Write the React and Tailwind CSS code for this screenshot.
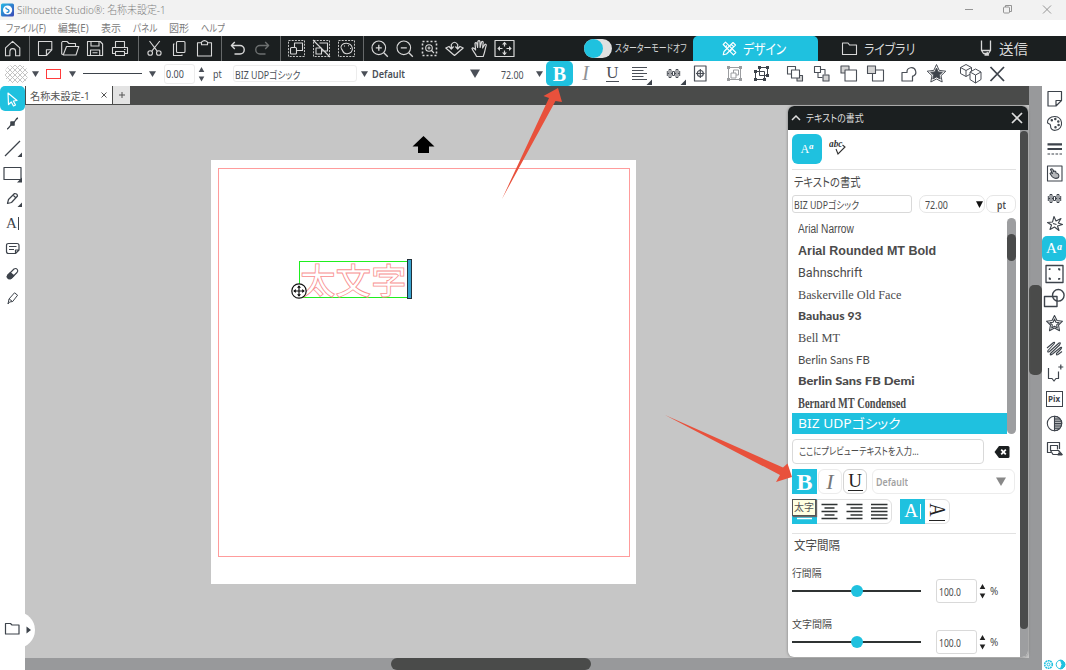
import { useLayoutEffect, useRef, useState } from 'react'
import clsx from 'clsx'

const JP = "font-['Noto_Sans','Noto_Sans_CJK_JP',sans-serif] [font-feature-settings:'palt']"
const SERIF = "font-['Liberation_Serif',serif]"

// Text squeezed or stretched to a fixed width
function Fit({ w, className, children }) {
  const ref = useRef(null)
  const [scale, setScale] = useState(1)

  useLayoutEffect(() => {
    setScale(w / ref.current.offsetWidth)
  }, [w])

  return (
    <span className={clsx('block shrink-0 whitespace-nowrap', className)} style={{ width: w }}>
      <span ref={ref} className="inline-block origin-left" style={{ transform: `scaleX(${scale})` }}>
        {children}
      </span>
    </span>
  )
}

function Ico({ className, sw = 1.1, children }) {
  return (
    <svg
      viewBox="0 0 25 25"
      className={clsx('block h-[25px] w-[25px] shrink-0', className)}
      fill="none"
      stroke="currentColor"
      strokeWidth={sw}
      strokeLinejoin="round"
    >
      {children}
    </svg>
  )
}

function Down({ className }) {
  return (
    <svg viewBox="0 0 10 10" preserveAspectRatio="none" className={clsx('block shrink-0', className)}>
      <path d="M0 0.5H10L5 10Z" fill="currentColor" />
    </svg>
  )
}

function Spinner({ className }) {
  return (
    <svg viewBox="0 0 7 16" className={clsx('block h-4 w-[7px] shrink-0', className)} fill="currentColor">
      <path d="M3.5 1L6.3 6H0.7Z M3.5 15.5L6.3 10.5H0.7Z" />
    </svg>
  )
}

function Sep({ className }) {
  return <div className={clsx('h-[25px] w-px shrink-0 bg-[#66696a]', className)} />
}

const corner = <path d="M25 18.5V24H19.5Z" fill="#3d434b" stroke="none" />

function TitleBar() {
  return (
    <div className="flex h-5 items-center bg-[#f2f2f2] text-[#808080]">
      <svg viewBox="0 0 14 14" className="ml-px h-[14px] w-[14px]">
        <defs>
          <linearGradient id="logo" x1="0" y1="0" x2="1" y2="1">
            <stop offset="0" stopColor="#25b9e6" />
            <stop offset="1" stopColor="#3a45b5" />
          </linearGradient>
        </defs>
        <rect x="0" y="0.5" width="13" height="13" rx="1.5" fill="url(#logo)" />
        <circle cx="6.6" cy="7" r="4.6" fill="#fff" />
        <path d="M4.8 4.4C4.8 7 8 5.8 8 7.8C8 9.4 6.4 9.6 5.6 9.2" fill="none" stroke="#2b8fd6" strokeWidth="1.4" />
      </svg>
      <Fit w={149} className={clsx(JP, 'ml-[2px] text-[11px] font-light leading-5')}>Silhouette Studio®: 名称未設定-1</Fit>
      <svg viewBox="0 0 90 20" className="ml-auto mr-[12px] h-5 w-[90px]" fill="none" stroke="#8a8a8a" strokeWidth="0.9">
        <path d="M1 9.5H9 M79 5.5L87 13.5M87 5.5L79 13.5" />
        <rect x="39.5" y="7" width="6" height="6" rx="1" />
        <path d="M41.5 7V5.5H47.5V11.5H45.5" />
      </svg>
    </div>
  )
}

function MenuBar() {
  return (
    <div className={clsx(JP, 'flex h-4 bg-white pl-[6px] text-[10px] leading-4 text-[#7a7a7a]')}>
      <Fit w={40}>ファイル(F)</Fit>
      <Fit w={31} className="ml-3">編集(E)</Fit>
      <Fit w={20} className="ml-3">表示</Fit>
      <Fit w={24} className="ml-3">パネル</Fit>
      <Fit w={20} className="ml-3">図形</Fit>
      <Fit w={24} className="ml-3">ヘルプ</Fit>
    </div>
  )
}

const dashedBox = <rect x="4.5" y="4.5" width="16" height="16" strokeDasharray="2 1.2" strokeWidth="0.9" />

function MainBar() {
  return (
    <div className="flex h-[25px] items-center bg-[#1b1f20] text-[#d8d8d8]">
      <Ico><path d="M5.5 11.8L12.6 5.3L19.8 11.8V19.8H15.6V15.5A2.8 2.8 0 0 0 9.9 15.5V19.8H5.5Z" /></Ico>
      <Sep className="ml-1" />
      <Ico className="ml-[3px]"><path d="M5.5 5.5H18.8V13.8L13.4 19.5H5.5Z M18.8 13.8H13.4V19.5" /></Ico>
      <Ico><path d="M6 19L3.7 18V6.5L4.5 5.5H9L11 7.5H17.5V10.5 M5.2 19L8.5 10.5H20.8L18 19Z" /></Ico>
      <Ico><path d="M4.5 5.5H17.2L19.6 8V19.5H4.5Z M8 5.5V10H16V5.5 M7.5 19.5V14H16.7V19.5 M9.5 16.7H14.5" /></Ico>
      <Ico><path d="M7.5 11.5V5.5H16.5V11.5 M7 17.5H4.5V11.5H19.5V17.5H17 M7.5 15.5H16.5V19.5H7.5Z M16 13.5h1.5" /></Ico>
      <Sep className="ml-[5px]" />
      <Ico className="ml-[3px]">
        <path d="M7.5 5L15.2 15.2M17.8 5L9.8 15.2" />
        <circle cx="8.2" cy="17" r="2.3" />
        <circle cx="16.8" cy="17" r="2.3" />
      </Ico>
      <Ico>
        <rect x="9.5" y="5.5" width="8.5" height="11" rx="1" />
        <path d="M7.5 8H6.5V19.5H15V18.5" />
      </Ico>
      <Ico>
        <path d="M9.5 6.8H5.5V20H19.5V6.8H15.5" />
        <path d="M9.5 8.7V6.2Q12.5 3 15.5 6.2V8.7Z" />
      </Ico>
      <Sep className="ml-[4px]" />
      <Ico className="ml-[3px]" sw={1.4}><path d="M9.8 6L6.4 9.5L9.8 13 M6.6 9.5H15A3.8 3.8 0 0 1 15 18H9.5" /></Ico>
      <Ico className="text-[#6d7070]" sw={1.4}><path d="M15.2 6L18.6 9.5L15.2 13 M18.4 9.5H10A3.8 3.8 0 0 0 10 18H15.5" /></Ico>
      <Sep className="ml-[5px]" />
      <Ico className="ml-[3px]">
        {dashedBox}
        <rect x="10.5" y="7" width="8" height="7.5" />
        <rect x="6.5" y="11.5" width="6" height="6.5" rx="1" fill="#1b1f20" />
      </Ico>
      <Ico>
        {dashedBox}
        <path d="M10.5 7H18.5V15H12.5 M7 12H12.5V18H7Z M4 4L21 21" />
      </Ico>
      <Ico>
        {dashedBox}
        <path d="M12.5 7.3C8 7 5.8 11 7.5 13C9 14 8.5 17.5 12.5 17.7C16.5 18 19 15 18.3 12C17.8 9.5 15.5 7.5 12.5 7.3Z" fill="#1b1f20" />
        <path d="M10 10h1M14 9.7h1M16 12.5h1" />
      </Ico>
      <Sep className="ml-1" />
      <Ico className="ml-[3px]">
        <circle cx="11.8" cy="11.8" r="6.8" />
        <path d="M16.8 16.8L20.8 20.8 M8.8 11.8H14.8M11.8 8.8V14.8" strokeWidth="1.3" />
      </Ico>
      <Ico>
        <circle cx="11.8" cy="11.8" r="6.8" />
        <path d="M16.8 16.8L20.8 20.8 M8.8 11.8H14.8" strokeWidth="1.3" />
      </Ico>
      <Ico>
        <rect x="5.5" y="5.5" width="14" height="14" strokeDasharray="2 2" strokeWidth="1.6" />
        <circle cx="12" cy="12" r="3.3" />
        <path d="M14.5 14.5L17 17M12 10.5V13.5M10.5 12H13.5" />
      </Ico>
      <Ico sw={1.2}>
        <path d="M7.5 10.3L3.8 12L12.5 19.5L21.2 12L17.5 10.3 M9.3 12.5V8.5Q12.5 4 15.7 8.5V12.5 M7 10.5L9.3 13L11.6 10.5 M13.4 10.5L15.7 13L18 10.5" />
      </Ico>
      <Ico sw={1.2}>
        <path d="M9.5 20.5C9 18 6 15.5 5 12.5C5.5 11.5 7.2 12 8.6 14L8 7.5C8.5 6 9.7 6.5 9.9 7.5L10.6 11.5L10.9 5.5C11.3 4.3 12.6 4.3 12.9 5.5L13.1 11.5L14.5 6C15.2 5 16.3 5.5 16.2 6.5L15.6 12L17.8 8.5C18.7 7.8 19.5 8.5 19.2 9.5C18.3 12 18 16 16.2 20.5Z" />
      </Ico>
      <Ico sw={1.2}>
        <rect x="3" y="4.5" width="19" height="16" />
        <path d="M12.5 6.5V10.5M12.5 14.5V18.5M6 12.5H10.5M14.5 12.5H19" />
        <path d="M12.5 5.8L15 8.5H10Z M12.5 19.2L15 16.5H10Z M5.3 12.5L8 10V15Z M19.7 12.5L17 10V15Z" fill="currentColor" stroke="none" />
      </Ico>

      <div className="ml-[67px] flex h-[19px] w-[28px] rounded-full bg-[#e0e0e0]">
        <div className="h-[19px] w-[19px] rounded-full bg-[#1fc1df]" />
      </div>
      <Fit w={72} className={clsx(JP, 'ml-[3px] text-[10.5px] leading-[25px]')}>スターターモードオフ</Fit>

      <div className="ml-[6px] flex h-[25px] w-[125px] items-center rounded-t-[5px] bg-[#1fc1df] text-white">
        <Ico className="ml-6">
          <path d="M8.5 6.2L6.2 8.5L16.5 18.8L18.8 16.5Z M8 11.3L10 9.5M12.5 15.7L14.5 14" />
          <path d="M16 6.5L18.5 9L9.5 18L6.2 18.8L7 15.5Z M14.2 8.3L16.8 10.8" />
        </Ico>
        <Fit w={43} className={clsx(JP, 'ml-px text-[14px] leading-[25px]')}>デザイン</Fit>
      </div>
      <Ico className="ml-[19px]"><path d="M5.5 7H11L12.5 9H19.5V18.5H5.5Z" /></Ico>
      <Fit w={51} className={clsx(JP, 'ml-[2px] text-[14px] leading-[25px]')}>ライブラリ</Fit>
      <Ico className="ml-[58px]" sw={1.3}>
        <path d="M8.5 4.5V14.5H17.5V4.5 M8.5 14.5L10.5 17.5H15.5L17.5 14.5 M11.5 19H15.5L14 16" />
      </Ico>
      <Fit w={29} className={clsx(JP, 'ml-px text-[14px] leading-[25px]')}>送信</Fit>
    </div>
  )
}

function AlignIcon({ x = [5, 20, 5, 16.5], className }) {
  return (
    <Ico className={className} sw={1.5}>
      <path
        d={[5.5, 9, 12.5, 16, 19.5].map((y, i) => `M${i % 2 ? x[2] : x[0]} ${y}H${i % 2 ? x[3] : x[1]}`).join('')}
        strokeLinejoin="miter"
      />
    </Ico>
  )
}

function SpaceIcon({ children }) {
  return (
    <Ico sw={1}>
      <path d="M6.5 12.5H8M10 12.5H11.5M13.5 12.5H15M17 12.5H18.5M6.3 10V15M18.7 10V15" />
      <rect x="8" y="8.5" width="2" height="8" />
      <rect x="11.5" y="10.5" width="2" height="4" />
      <rect x="15" y="8.5" width="2" height="8" />
      {children}
    </Ico>
  )
}

function GroupIcon({ solid }) {
  return (
    <Ico className={solid ? 'text-[#3d434b]' : 'text-[#9b9da0]'} sw={1}>
      {solid ? (
        <>
          <rect x="6.5" y="10.5" width="9" height="8" />
          <rect x="10.5" y="6.5" width="8" height="8" />
          <path d="M5 9h3v3H5zM14 17h3v3h-3zM5 17h3v3H5zM9 5h3v3H9zM17 5h3v3h-3zM17 13h3v3h-3z" fill="currentColor" stroke="none" />
        </>
      ) : (
        <>
          <rect x="6.5" y="6.5" width="12" height="12" />
          <path d="M9 12H14V17H9ZM11.5 12V9H16.5V14H14" />
          <path d="M5 5h3v3H5zM17 5h3v3h-3zM5 17h3v3H5zM17 17h3v3h-3z" fill="currentColor" stroke="none" />
        </>
      )}
    </Ico>
  )
}

function OptionsBar() {
  return (
    <div className="flex h-[25px] items-center bg-white pl-[5px] text-[#4a4f57]">
      <svg viewBox="0 0 23 18" className="h-[18px] w-[23px]">
        <defs>
          <pattern id="mesh" width="5" height="5" patternUnits="userSpaceOnUse">
            <path d="M0 0L5 5M5 0L0 5" stroke="#bdbdbd" strokeWidth="0.9" />
          </pattern>
        </defs>
        <rect width="23" height="18" rx="8" fill="url(#mesh)" />
      </svg>
      <Down className="ml-1 h-[6px] w-[7px]" />
      <div className="ml-[7px] h-[10px] w-[15px] border border-[#ff3b3b]" />
      <Down className="ml-[8px] h-[6px] w-[7px]" />
      <div className="ml-[7px] h-[1.5px] w-[59px] bg-[#3d434b]" />
      <Down className="ml-[7px] h-[6px] w-[7px]" />
      <div className={clsx(JP, 'ml-2 flex h-5 w-[31px] items-center rounded-[3px] border border-[#ececec] pl-px pt-[2px] text-[10px]')}>
        <Fit w={18}>0.00</Fit>
      </div>
      <Spinner className="ml-[3px]" />
      <Fit w={9} className={clsx(JP, 'ml-2 pt-px text-[10px]')}>pt</Fit>
      <div className={clsx(JP, 'ml-[11px] flex h-[17px] w-[124px] items-center rounded-[3px] border border-[#ececec] pl-px pt-[3px] text-[10px]')}>
        <Fit w={65}>BIZ UDPゴシック</Fit>
      </div>
      <Down className="ml-1 h-[6px] w-[7px]" />
      <Fit w={33} className={clsx(JP, 'ml-1 pt-px text-[10px] font-semibold')}>Default</Fit>
      <Down className="ml-[65px] h-[9px] w-[10px]" />
      <Fit w={23} className={clsx(JP, 'ml-[21px] pt-[3px] text-[10px]')}>72.00</Fit>
      <Down className="ml-[12px] h-[6px] w-[7px]" />
      <div className={clsx(SERIF, 'ml-[3px] flex h-[25px] w-[27px] items-center justify-center rounded-[5px] bg-[#1fc1df] text-[20px] font-bold text-white')}>B</div>
      <div className={clsx(SERIF, 'w-[25px] text-center text-[20px] italic leading-[25px] text-[#8f9296]')}>I</div>
      <div className={clsx(SERIF, 'ml-[2px] flex w-[25px] justify-center text-[17px] leading-[16px]')}>
        <span className="w-[13px] border-b border-[#4a4f57] text-center">U</span>
      </div>
      <div className="ml-[2px] flex">
        <Ico sw={1.2}>
          <path d="M5 6.5H20M5 9.5H16.5M5 12.5H20M5 15.5H16.5M5 18.5H20" />
          {corner}
        </Ico>
      </div>
      <div className="ml-[9px]"><SpaceIcon>{corner}</SpaceIcon></div>
      <Ico className="ml-[2px]" sw={1.2}>
        <rect x="6.5" y="5" width="11.5" height="15" />
        <circle cx="12.3" cy="12.5" r="3" />
        <path d="M12.3 8V17M8 12.5H16.6" />
      </Ico>
      <div className="ml-[9px] flex gap-[2px]">
        <GroupIcon />
        <GroupIcon solid />
      </div>
      <div className="ml-2 flex gap-[2px]">
        <Ico>
          <rect x="5.5" y="5.5" width="8" height="7.5" />
          <rect x="15" y="14.5" width="5.5" height="5.5" fill="#d4d4d4" />
          <rect x="9.5" y="9" width="8" height="8" fill="#fff" />
        </Ico>
        <Ico>
          <rect x="5.5" y="5.5" width="6" height="6" />
          <path d="M12 8.5H16V13.5M9 12V16.5H13.5" />
          <rect x="14" y="14" width="6" height="6" fill="#d4d4d4" />
        </Ico>
        <Ico>
          <rect x="5" y="5" width="8" height="7" fill="#d4d4d4" />
          <rect x="9" y="9" width="11.5" height="11" fill="#fff" />
        </Ico>
        <Ico>
          <rect x="9.5" y="9" width="11" height="11" />
          <rect x="4.5" y="5" width="8" height="7.5" fill="#d4d4d4" />
        </Ico>
      </div>
      <Ico className="ml-2" sw={1.2}>
        <path d="M6 11.5H11A4.4 4.4 0 1 1 17 15.2H16.5V20H6Z" />
      </Ico>
      <Ico className="ml-[3px]" sw={1}>
        <path d="M12.5 3.5L15.2 9.4L21.8 10.2L17 14.7L18.2 21L12.5 18L6.8 21L8 14.7L3.2 10.2L9.8 9.4Z" />
        <path d="M12.5 7L14.2 10.9L18.4 11.3L15.3 14.1L16.2 18L12.5 16L8.8 18L9.7 14.1L6.6 11.3L10.8 10.9Z" fill="#3d434b" />
      </Ico>
      <Ico className="ml-[9px]" sw={1}>
        <path d="M2.5 6.5L8 3.5L13.5 6.5V12.5L8 15.5L2.5 12.5Z M2.5 6.5L8 9.5L13.5 6.5M8 9.5V15.5" />
        <path d="M12 11L17.5 8L23 11V18.5L17.5 22L12 18.5Z" fill="#fff" />
        <path d="M12 11L17.5 14L23 11M17.5 14V22" />
      </Ico>
      <Ico className="ml-[2px] text-[#3d434b]" sw={1.8}><path d="M5.5 6L19 20M19 6L5.5 20" /></Ico>
    </div>
  )
}

function LeftRail() {
  return (
    <div className="flex w-[25px] shrink-0 flex-col bg-white text-[#3d434b]">
      <div className="rounded-[5px] bg-[#1fc1df] text-white">
        <Ico sw={1.2}><path d="M8 7L17 14.5L13.3 15L15.5 19L13.5 20L11.3 16L8.5 18.5Z" /></Ico>
      </div>
      <Ico sw={1.3}>
        <path d="M7 18C9 18 9.5 14.5 12.5 12.8S15.5 7.5 18 7" />
        <rect x="10.9" y="11" width="3.2" height="3.2" fill="#3d434b" />
      </Ico>
      <Ico sw={1.2}><path d="M5 20L20 5" /><path d="M22 16.5V21H17.5Z" fill="#3d434b" stroke="none" /></Ico>
      <Ico sw={1.2}><rect x="4" y="6.5" width="17" height="12" /><path d="M22 16.5V21.5H17Z" fill="#3d434b" stroke="none" /></Ico>
      <Ico sw={1.2}>
        <path d="M7.5 17.5L8.5 13.5L14.5 7.5Q17.5 7.5 17.5 10L11.5 16.5Z M13 9L16 12" />
        <path d="M22 16.5V21H17.5Z" fill="#3d434b" stroke="none" />
      </Ico>
      <div className={clsx(SERIF, 'flex h-[25px] items-center justify-center text-[15px]')}>
        A<span className="ml-px h-[13px] w-px bg-[#3d434b]" />
      </div>
      <Ico sw={1.2}><path d="M8.5 7.5H17Q19 7.5 19 9.5V14L15.5 17.5H8.5Q6.5 17.5 6.5 15.5V9.5Q6.5 7.5 8.5 7.5Z M9 10.5H16.5M9 13.5H14M19 14H15.5V17.5" /></Ico>
      <Ico sw={1.1}>
        <path d="M7.5 14.5L14 8Q16 6.8 17.3 8.5Q18.5 10 17 11.5L11.5 17Q9.5 18.5 8 17Q6.5 15.7 7.5 14.5Z" />
        <path d="M7.5 14.5L10.3 11.7L14 14.6L11.5 17Q9.5 18.5 8 17Q6.5 15.7 7.5 14.5Z" fill="#3d434b" />
      </Ico>
      <Ico sw={1}><path d="M8 18L9 13L14.5 6.8L17.6 9.2L12.7 15.5L9.5 16Z M9.2 13L12.5 15.5" /></Ico>
      <Ico className="mt-auto mb-[29px]" sw={1.2}><path d="M5.5 7.5H10.5L12 9H19V18H5.5Z" /></Ico>
    </div>
  )
}

function RightRail() {
  return (
    <div className="flex w-6 shrink-0 flex-col items-center bg-white text-[#3d434b]">
      <Ico sw={1.2}><path d="M6 5.5H19.5V14.5L14 20H6Z M19.5 14.5H14V20" /></Ico>
      <Ico>
        <path d="M13 5.5C8 5.3 5 9 5.5 11.5C6 13.5 8.5 12 8.5 14.5C8.5 17.5 10 19.7 13.5 19.3C18 18.8 20 15 19.5 11.5C19 8 16.5 5.8 13 5.5Z" />
        <circle cx="9.8" cy="9.3" r="0.7" /><circle cx="13.3" cy="8" r="0.7" /><circle cx="16.3" cy="10.5" r="0.7" />
        <circle cx="16.6" cy="14" r="0.7" /><circle cx="13.5" cy="16.3" r="0.7" />
      </Ico>
      <Ico sw={2.2}><path d="M5.5 8.3H20M5.5 13H20" /><path d="M5.5 18H20" strokeWidth="1" strokeDasharray="2.6 1.4" /></Ico>
      <Ico sw={1.1}>
        <rect x="5.5" y="5" width="14.5" height="15" />
        <path d="M8.5 8.5C10 7 11.5 8.5 11.5 10.5C13 9.5 14 10.5 14 12C16.5 12 17.5 14.5 16.5 16.5C14.5 18 11.5 17.5 10 15.5L8 12.5C8.5 11.5 9.5 11.5 10.5 12.5Z" fill="#b5b7ba" />
      </Ico>
      <SpaceIcon />
      <Ico><path d="M12 5.5L14 10L19 7.5L16.3 12L20.5 13.5L15.5 15L17 19.5L12.5 16L8 18.5L9.5 14L5.5 11.5L10.5 11Z M11 12.5L14.5 13.5" /></Ico>
      <div className={clsx(SERIF, 'flex h-[25px] w-6 items-center justify-center rounded-[5px] bg-[#1fc1df] text-[15px] text-white')}>
        A<span className="-mt-1 text-[10px] font-bold italic">a</span>
      </div>
      <Ico sw={1.3}>
        <rect x="4" y="4.5" width="17" height="17" />
        <path d="M7.5 9V8H8.5M16 8H17.5V9.5M7.5 16.5V18H9M16 18H17.5V17" strokeWidth="1.6" />
      </Ico>
      <Ico sw={1.4}><rect x="2.5" y="10.5" width="12.5" height="10" /><circle cx="16.3" cy="9.3" r="5.8" /></Ico>
      <Ico>
        <path d="M12.5 4.5L15 9.5L20.5 10.2L16.5 14L17.5 19.7L12.5 17L7.5 19.7L8.5 14L4.5 10.2L10 9.5Z" />
        <path d="M12.5 8L13.9 11.2L17 11.6L14.7 13.8L15.3 17L12.5 15.3L9.7 17L10.3 13.8L8 11.6L11.1 11.2Z" />
      </Ico>
      <Ico sw={1.1}><path d="M5 12L11.5 6.5Q13.5 5.5 12 8L6 14.5Q5 17 7.5 15.5L17 7Q19.5 6 17.5 9L8.5 17.5Q7.5 20 10.5 18L18.5 11.5Q20.5 10.5 19 13L14.5 17.5Q14 19.5 16 18.5L20 15.5" /></Ico>
      <Ico sw={1.2}><path d="M6.5 7V17.5H10L12 20L14 17.5H16.5V10.5M18.8 3.5V8.5M16.3 6H21.3" /></Ico>
      <div className="flex h-[25px] items-center">
        <div className="flex h-4 w-[17px] items-center justify-center border border-[#3d434b] font-['Open_Sans',sans-serif] text-[8px] font-bold">
          Pix
        </div>
      </div>
      <Ico>
        <circle cx="12.5" cy="12.5" r="7.2" />
        <path d="M12.5 5.3A7.2 7.2 0 0 1 12.5 19.7Z" fill="#b9bbbd" />
        <path d="M12.5 8H18M12.5 10.3H19.5M12.5 12.6H19.7M12.5 15H19M12.5 17.2H17.5" />
      </Ico>
      <Ico sw={1.2}>
        <path d="M17.5 13V6.5H5.5V16.5H9 M8.5 14V9.5H15.5V13.5 M8.5 14.5H16.5L20 18.5H11Z" />
        <path d="M17 17L20 18.8H16Z" fill="#3d434b" />
      </Ico>
      <div className="mt-auto flex h-3 w-6 items-center gap-px pl-px text-[#1fc1df]">
        <svg viewBox="0 0 11 11" className="h-[11px] w-[11px]" fill="none" stroke="currentColor">
          <circle cx="5.5" cy="5.5" r="3.8" strokeWidth="1.6" strokeDasharray="1.8 0.6" />
          <circle cx="5.5" cy="5.5" r="1.5" />
        </svg>
        <svg viewBox="0 0 11 11" className="h-[11px] w-[11px]" fill="none" stroke="currentColor">
          <circle cx="5.5" cy="5.5" r="4.3" />
          <path d="M5.5 1.2A4.3 4.3 0 0 1 5.5 9.8L7 5.5Z" fill="currentColor" />
        </svg>
      </div>
    </div>
  )
}

// Font names and the width that each takes in the list
const FONTS = [
  { name: 'Arial Narrow', w: 56, cls: "font-['Liberation_Sans',sans-serif] text-[12.5px]" },
  { name: 'Arial Rounded MT Bold', w: 138, cls: "font-['Liberation_Sans',sans-serif] text-[12.5px] font-bold" },
  { name: 'Bahnschrift', w: 64, cls: "font-['Roboto',sans-serif] text-[12px]" },
  { name: 'Baskerville Old Face', w: 103, cls: "font-['Liberation_Serif',serif] text-[12px]" },
  { name: 'Bauhaus 93', w: 64, cls: "font-['Lato',sans-serif] text-[12px] font-black" },
  { name: 'Bell MT', w: 42, cls: "font-['Liberation_Serif',serif] text-[12px]" },
  { name: 'Berlin Sans FB', w: 72, cls: "font-['Lato',sans-serif] text-[12px]" },
  { name: 'Berlin Sans FB Demi', w: 117, cls: "font-['Lato',sans-serif] text-[12px] font-black" },
  { name: 'Bernard MT Condensed', w: 108, cls: "font-['Liberation_Serif',serif] text-[14.5px] leading-5 font-bold" },
]

function SpacingControl({ label, w, className }) {
  return (
    <div className={className}>
      <Fit w={w} className={clsx(JP, 'text-[10.5px] leading-3')}>{label}</Fit>
      <div className="flex h-6 items-center">
        <div className="flex h-[1.5px] w-[129px] items-center justify-center bg-[#2f3333]">
          <div className="h-3 w-3 rounded-full bg-[#1fc1df]" />
        </div>
        <div className={clsx(JP, 'ml-[15px] flex h-6 w-[41px] items-center rounded-[3px] border border-[#d9d9d9] pl-[2px] pt-[3px] text-[10.5px]')}>
          <Fit w={22}>100.0</Fit>
        </div>
        <Spinner className="ml-[2px] text-[#222]" />
        <Fit w={8} className={clsx(JP, 'ml-[4px] text-[10px]')}>%</Fit>
      </div>
    </div>
  )
}

function TextPanel() {
  return (
    <div className="absolute left-[763px] top-[20px] flex h-[551px] w-[240px] flex-col overflow-hidden rounded-[6px] bg-white text-[#4b4b4b] shadow-[0_0_3px_#777]">
      <div className="flex h-6 shrink-0 items-center bg-[#1b1f20] text-[#dedede]">
        <svg viewBox="0 0 10 6" className="ml-[3px] h-[6px] w-[10px]" fill="none" stroke="currentColor" strokeWidth="1.5">
          <path d="M1 5L5 1L9 5" />
        </svg>
        <Fit w={58} className={clsx(JP, 'ml-[5px] text-[10.5px] leading-6')}>テキストの書式</Fit>
        <svg viewBox="0 0 12 12" className="ml-auto mr-[5px] h-3 w-3" fill="none" stroke="#dedede" strokeWidth="1.7">
          <path d="M1 1L11 11M11 1L1 11" />
        </svg>
      </div>

      <div className="flex flex-1">
        <div className="w-[228px] pl-1">
          <div className="flex h-[40px] items-start border-b border-[#e2e2e2] pt-1">
            <div className={clsx(SERIF, 'flex h-[30px] w-[30px] items-center justify-center rounded-[6px] bg-[#1fc1df] text-[12px] text-white')}>
              A<span className="-mt-1 text-[9px] font-bold italic">a</span>
            </div>
            <div className="relative ml-[7px] mt-1 h-5 w-[18px]">
              <Fit w={13} className={clsx(SERIF, 'text-[10px] font-bold italic leading-3 text-[#333]')}>abc</Fit>
              <svg viewBox="0 0 18 20" className="absolute inset-0 h-5 w-[18px]" fill="none" stroke="#333" strokeWidth="1.1">
                <path d="M7 11L9 16L16 9L13.5 7" />
              </svg>
            </div>
          </div>

          <Fit w={67} className={clsx(JP, 'ml-[2px] text-[12.5px] leading-[25px]')}>テキストの書式</Fit>
          <div className={clsx(JP, 'flex h-[18px] text-[10.5px] leading-[18px]')}>
            <div className="w-[120px] rounded-[3px] border border-[#d9d9d9] pl-px">
              <Fit w={65}>BIZ UDPゴシック</Fit>
            </div>
            <div className="ml-[7px] flex w-[66px] items-center rounded-[7px] border border-[#e6e6e6] pl-[5px]">
              <Fit w={23} className="pt-px">72.00</Fit>
              <Down className="ml-auto mr-px h-[7px] w-[7px] text-[#111]" />
            </div>
            <div className="ml-px flex w-[30px] justify-center rounded-[7px] border border-[#e6e6e6]">
              <Fit w={9} className="font-semibold">pt</Fit>
            </div>
          </div>

          <div className="mt-[5px] flex h-[216px]">
            <div className="w-[215px]">
              {FONTS.map(f => (
                <div key={f.name} className="flex h-[21.65px] items-center pl-[6px] pt-[2px]">
                  <Fit w={f.w} className={f.cls}>{f.name}</Fit>
                </div>
              ))}
              <div className="flex h-[21.2px] items-center bg-[#1fc1df] pl-[6px] text-white">
                <Fit w={103} className={clsx(JP, 'text-[13px] leading-5')}>BIZ UDPゴシック</Fit>
              </div>
            </div>
            <div className="w-[9px] rounded-full bg-[#9d9ea0] pt-4">
              <div className="h-[27px] rounded-full bg-[#4a4b4b]" />
            </div>
          </div>

          <div className="mt-[5px] flex h-[25px] items-center">
            <div className="flex h-[25px] w-[192px] items-center rounded-[4px] border border-[#d9d9d9] pl-[6px]">
              <Fit w={120} className={clsx(JP, 'text-[10.5px]')}>ここにプレビューテキストを入力...</Fit>
            </div>
            <svg viewBox="0 0 16 14" className="ml-[10px] h-[14px] w-4">
              <path d="M0.5 7L5 1H14Q15.5 1 15.5 2.5V11.5Q15.5 13 14 13H5Z" fill="#1b1f20" />
              <path d="M7.2 4.7L11.8 9.3M11.8 4.7L7.2 9.3" stroke="#fff" strokeWidth="1.8" />
            </svg>
          </div>

          <div className={clsx(SERIF, 'mt-[5px] flex h-[25px]')}>
            <div className="flex h-[25px] w-[25px] items-center justify-center bg-[#1fc1df] pt-px text-[24px] font-bold text-white">B</div>
            <div className="ml-px flex h-[25px] w-[24px] items-center justify-center rounded-[6px] border border-[#ececec] text-[22px] italic text-[#777]">I</div>
            <div className="ml-px flex h-[25px] w-[24px] justify-center rounded-[6px] border border-[#d5d5d5] pt-[2px] text-[19px] leading-[17px] text-[#222]">
              <span className="h-[19px] w-[15px] border-b border-[#222] text-center">U</span>
            </div>
            <div className="ml-[5px] flex h-[25px] w-[143px] items-center rounded-[6px] border border-[#ececec] px-[3px] text-[#a2a2a2]">
              <Fit w={32} className={clsx(JP, 'pt-px text-[10px] font-semibold')}>Default</Fit>
              <Down className="ml-auto mr-[5px] h-[9px] w-[10px] text-[#888]" />
            </div>
          </div>

          <div className="mt-[5px] flex h-[25px]">
            <div className="relative flex w-[100px] rounded-[6px] border border-[#e0e0e0] text-[#2f3333]">
              <div className="-ml-px -mt-px h-[25px] w-[25px] bg-[#1fc1df] text-white"><AlignIcon /></div>
              <AlignIcon className="-mt-px" x={[4.5, 20.5, 7.5, 17.5]} />
              <AlignIcon className="-mt-px" x={[4.5, 20.5, 8.5, 20.5]} />
              <AlignIcon className="-mt-px" x={[4, 20.5, 4, 20.5]} />
              <div className="absolute -left-px -top-px flex h-[17px] w-[24px] items-center border border-[#555] bg-[#ffffe1] pl-px text-[#555] shadow-[1px_1px_1px_#666]">
                <Fit w={20} className={clsx(JP, 'text-[10.5px] leading-[15px]')}>太字</Fit>
              </div>
            </div>
            <div className="ml-2 flex w-[50px] rounded-[6px] border border-[#e0e0e0]">
              <div className={clsx(SERIF, '-ml-px -mt-px flex h-[25px] w-[25px] items-center justify-center bg-[#1fc1df] text-[19px] text-white')}>
                A<span className="ml-[2px] h-[15px] w-px bg-white" />
              </div>
              <div className={clsx(SERIF, 'flex h-[23px] w-[24px] flex-col items-center text-[#222]')}>
                <span className="mt-px rotate-90 scale-x-[0.8] text-[23px] leading-[18px]">A</span>
                <span className="mt-px h-px w-[16px] bg-[#222]" />
              </div>
            </div>
          </div>

          <div className="mt-[9px] border-t border-[#e2e2e2]" />
          <Fit w={46} className={clsx(JP, 'ml-[2px] text-[12.5px] leading-6')}>文字間隔</Fit>
          <SpacingControl className="mt-[9px]" label="行間隔" w={30} />
          <SpacingControl className="mt-[15px]" label="文字間隔" w={40} />
        </div>
        <div className="ml-auto w-2 bg-[#9d9ea0]">
          <div className="mt-px h-[498px] rounded-full bg-[#4a4b4b]" />
        </div>
      </div>
    </div>
  )
}

function Canvas() {
  return (
    <div className="relative flex-1 overflow-hidden bg-[#c6c6c6]">
      <svg viewBox="0 0 23 17" className="absolute left-[387px] top-[31px] h-[17px] w-[23px]">
        <path d="M11.5 0L22.5 10.5H17V17H6V10.5H0.5Z" fill="#000" />
      </svg>
      <div className="absolute left-[186px] top-[55px] h-[424px] w-[425px] bg-white">
        <div className="absolute left-[7px] top-[8px] h-[389px] w-[412px] border border-[#ff9c9c]" />
      </div>
      <div className="absolute left-[274px] top-[156px] h-[37px] w-[109px] border border-[#1fee1f]">
        <span className="block whitespace-nowrap font-['Noto_Sans_CJK_JP',sans-serif] text-[35.5px] font-medium leading-[34px] text-transparent [-webkit-text-stroke:0.8px_#f88f8f]">
          太文字
        </span>
      </div>
      <div className="absolute left-[382px] top-[154px] h-[40px] w-[5px] border border-[#22313a] bg-[#39a3d0]" />
      <svg viewBox="0 0 16 16" className="absolute left-[266px] top-[178px] h-4 w-4" fill="none" stroke="#111">
        <circle cx="8" cy="8" r="7.2" fill="#fff" strokeWidth="1.2" />
        <path d="M8 3V13M3 8H13" strokeWidth="1.2" />
        <path d="M8 2.2L10 4.8H6Z M8 13.8L10 11.2H6Z M2.2 8L4.8 6V10Z M13.8 8L11.2 6V10Z" fill="#111" stroke="none" />
      </svg>
      <div className="absolute bottom-[10px] left-[-8px] flex h-[36px] w-[18px] items-center justify-end rounded-r-full bg-white pr-1">
        <svg viewBox="0 0 5 8" className="h-2 w-[5px]"><path d="M0.5 0.5L5 4L0.5 7.5Z" fill="#3d434b" /></svg>
      </div>
    </div>
  )
}

function Workspace() {
  return (
    <div className="relative flex min-w-0 flex-1">
      <div className="flex flex-1 flex-col">
        <div className={clsx(JP, 'flex h-[19px] items-start bg-[#4a4b4a] text-[10.5px] text-[#555]')}>
          <div className="ml-px flex h-[18px] w-[86px] items-center bg-white pl-1">
            <Fit w={60} className="pt-px leading-[18px]">名称未設定-1</Fit>
            <svg viewBox="0 0 6 6" className="ml-[11px] h-[6px] w-[6px]" stroke="#555"><path d="M0.5 0.5L5.5 5.5M5.5 0.5L0.5 5.5" /></svg>
          </div>
          <div className="ml-px flex h-[18px] w-[17px] items-center justify-center bg-[#e3e3e3]">
            <svg viewBox="0 0 6 6" className="h-[6px] w-[6px]" stroke="#555"><path d="M0 3H6M3 0V6" /></svg>
          </div>
        </div>
        <Canvas />
        <div className="h-3 bg-[#98999b] pl-[366px]">
          <div className="h-3 w-[200px] rounded-full bg-[#4a4b4a]" />
        </div>
      </div>
      <div className="w-[13px] bg-[#98999b] pt-[199px]">
        <div className="h-[90px] rounded-[5px] bg-[#4a4b4a]" />
      </div>
      <TextPanel />
    </div>
  )
}

export default function App() {
  return (
    <div className="relative flex h-[670px] w-[1066px] flex-col overflow-hidden bg-white">
      <TitleBar />
      <MenuBar />
      <MainBar />
      <OptionsBar />
      <div className="flex flex-1">
        <LeftRail />
        <Workspace />
        <RightRail />
      </div>
      {/* Callout arrows */}
      <svg viewBox="0 0 1066 670" className="pointer-events-none absolute inset-0 h-full w-full" fill="#e8513c">
        <path d="M502 199L549 98L543.5 96L558 88L562 102L555.5 101Z" />
        <path d="M665 415L783 467.5L787.5 463.5L792 477L776 482L780 475Z" />
      </svg>
    </div>
  )
}
